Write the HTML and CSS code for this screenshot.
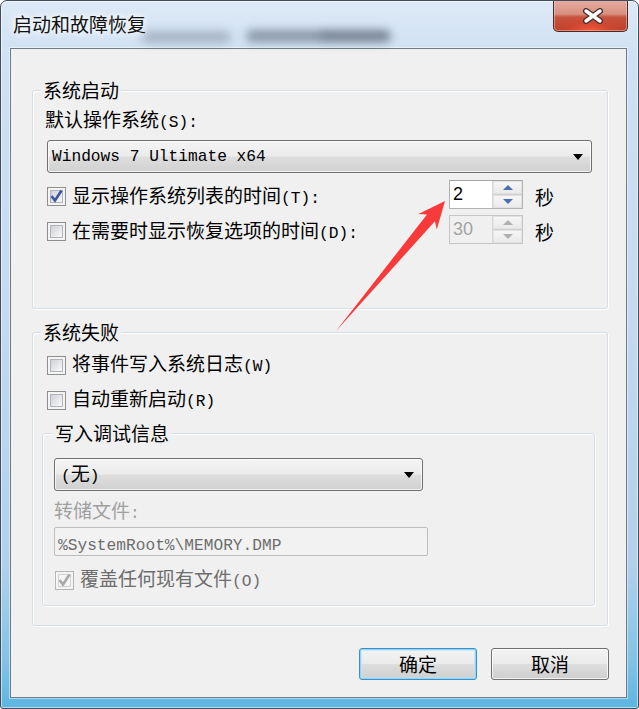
FILE: index.html
```html
<!DOCTYPE html>
<html lang="zh-CN">
<head>
<meta charset="utf-8">
<title>启动和故障恢复</title>
<link rel="stylesheet" href="styles.css">
</head>
<body>
<div class="window">
  <div class="titlebar">
    <span class="title">启动和故障恢复</span>
    <span class="ghost ghost-a"></span>
    <span class="ghost ghost-b"></span>
    <span class="ghost ghost-c"></span>
    <span class="close">
      <svg width="22" height="16" viewBox="0 0 22 16">
        <path d="M4 3 L18 13 M18 3 L4 13" stroke="#4a3030" stroke-width="6" stroke-linecap="round"/>
        <path d="M4 3 L18 13 M18 3 L4 13" stroke="#ffffff" stroke-width="3.4" stroke-linecap="round"/>
      </svg>
    </span>
  </div>

  <div class="client">
    <fieldset class="group g1">
      <legend>系统启动</legend>
      <div class="gbody g1body">
        <div class="label">默认操作系统<span class="lat">(S):</span></div>
        <div class="combo combo-os"><span class="lat">Windows 7 Ultimate x64</span><span class="caret"></span></div>
        <div class="row row1">
          <div class="chk"><span class="box"><svg viewBox="0 0 19 19"><path d="M4.5 9 L8 13.5 L14.5 3.5" fill="none" stroke="#3b57a0" stroke-width="2.6"/></svg></span><span>显示操作系统列表的时间<span class="lat">(T):</span></span></div>
          <div class="spin"><span class="val">2</span><span class="btns"><span class="sb"><i class="up"></i></span><span class="sb"><i class="down"></i></span></span></div>
          <span class="unit">秒</span>
        </div>
        <div class="row row2">
          <div class="chk"><span class="box"></span><span>在需要时显示恢复选项的时间<span class="lat">(D):</span></span></div>
          <div class="spin disabled"><span class="val">30</span><span class="btns"><span class="sb"><i class="up"></i></span><span class="sb"><i class="down"></i></span></span></div>
          <span class="unit">秒</span>
        </div>
      </div>
    </fieldset>

    <fieldset class="group g2">
      <legend>系统失败</legend>
      <div class="gbody g2body">
        <div class="line lw"><span class="box"></span><span>将事件写入系统日志<span class="lat">(W)</span></span></div>
        <div class="line lr"><span class="box"></span><span>自动重新启动<span class="lat">(R)</span></span></div>
        <fieldset class="group g3">
          <legend>写入调试信息</legend>
          <div class="gbody g3body">
            <div class="combo combo-dbg"><span><span class="lat">(</span>无<span class="lat">)</span></span><span class="caret"></span></div>
            <div class="label gray">转储文件<span class="lat">:</span></div>
            <div class="field"><span class="lat">%SystemRoot%\MEMORY.DMP</span></div>
            <div class="line lo dis"><span class="box"><svg viewBox="0 0 19 19"><path d="M4.5 9 L8 13.5 L14.5 3.5" fill="none" stroke="#a8a8a8" stroke-width="2.6"/></svg></span><span>覆盖任何现有文件<span class="lat">(O)</span></span></div>
          </div>
        </fieldset>
      </div>
    </fieldset>

    <div class="buttons">
      <button class="btn default">确定</button>
      <button class="btn">取消</button>
    </div>
  </div>

  <svg class="arrow" width="639" height="709" viewBox="0 0 639 709">
    <polygon points="336,331 427,214.5 418.4,214 445,201 436.8,229.4 434.9,221.3" fill="#f83a3a"/>
  </svg>
</div>
</body>
</html>
```

FILE: styles.css
```css
html, body {
  margin: 0;
  padding: 0;
  background: #ffffff;
}

body {
  font-family: "Noto Sans CJK SC", sans-serif;
  font-size: 19px;
  line-height: 20px;
  color: #000;
}

.lat {
  font-family: "Liberation Mono", monospace;
  font-size: 16.2px;
}

.window {
  position: relative;
  width: 639px;
  height: 709px;
  box-sizing: border-box;
  border: 1px solid #3f4d5c;
  border-radius: 7px 7px 3px 3px;
  background: linear-gradient(180deg, #dde9f6 0%, #cfe1f3 8%, #c3daf0 45%, #b0d0ec 80%, #7fc2e6 94%, #5cb5e0 100%);
  box-shadow: inset 0 0 0 1px rgba(255, 255, 255, 0.55);
  display: flex;
  flex-direction: column;
  overflow: hidden;
}

.titlebar {
  position: relative;
  height: 47px;
  flex: 0 0 47px;
  display: flex;
  justify-content: space-between;
  align-items: flex-start;
  padding: 0 10px 0 12px;
}

.title {
  position: relative;
  z-index: 1;
  margin-top: 12px;
  font-size: 19px;
  line-height: 22px;
  color: #111;
  text-shadow: 0 0 6px #fff, 0 0 10px #fff;
}

.ghost {
  position: absolute;
  height: 12px;
  border-radius: 6px;
  filter: blur(5px);
}

.ghost-a {
  left: 140px;
  top: 30px;
  width: 90px;
  background: rgba(80, 90, 110, 0.35);
}

.ghost-b {
  left: 245px;
  top: 29px;
  width: 80px;
  background: rgba(60, 70, 90, 0.5);
}

.ghost-c {
  left: 320px;
  top: 29px;
  width: 70px;
  background: rgba(50, 60, 80, 0.6);
}

.close {
  position: relative;
  z-index: 1;
  width: 75px;
  height: 32px;
  margin-top: -1px;
  box-sizing: border-box;
  border: 1px solid #4a2a28;
  border-top: none;
  border-radius: 0 0 5px 5px;
  background:
    radial-gradient(ellipse 60% 55% at 50% 100%, rgba(255, 90, 60, 0.9) 0%, rgba(220, 70, 45, 0.5) 50%, rgba(200, 60, 40, 0) 100%),
    linear-gradient(180deg, #e6aca2 0%, #d8907f 45%, #c6553f 55%, #b5402c 100%);
  box-shadow: inset 0 0 0 1px rgba(255, 220, 210, 0.45);
  display: flex;
  align-items: center;
  justify-content: center;
}

.close svg {
  display: block;
  margin-left: 4px;
}

.client {
  margin-left: 9px;
  width: 617px;
  height: 650px;
  flex: 0 0 650px;
  box-sizing: border-box;
  border: 1px solid #6f7c88;
  background: #f0f0f0;
  box-shadow: 0 0 0 1px rgba(255, 255, 255, 0.45);
  padding: 31px 18px 0 21px;
  display: flex;
  flex-direction: column;
}

.group {
  margin: 0;
  padding: 0;
  min-width: 0;
  border: 1px solid #d5dfe5;
  border-radius: 3px;
  box-shadow: inset 1px 1px 0 #ffffff, 1px 1px 0 #ffffff;
}

.group > legend {
  padding: 0 2px;
  margin-left: 8px;
  font-size: 19px;
  line-height: 20px;
  background: #f0f0f0;
}

.g1body {
  padding: 8px 15px 64px 14px;
}

.label {
  line-height: 22px;
  height: 22px;
  margin-left: -2px;
}

.combo {
  height: 33px;
  box-sizing: border-box;
  border: 1px solid #707070;
  border-radius: 3px;
  background: linear-gradient(180deg, #f4f4f4 0%, #ececec 48%, #dedede 52%, #d0d0d0 100%);
  box-shadow: inset 0 0 0 1px rgba(255, 255, 255, 0.75);
  display: flex;
  align-items: center;
  justify-content: space-between;
  padding: 0 8px 0 4px;
}

.combo-os {
  margin-top: 10px;
}

.caret {
  width: 0;
  height: 0;
  border-left: 5.5px solid transparent;
  border-right: 5.5px solid transparent;
  border-top: 6px solid #000;
}

.row {
  display: flex;
  align-items: center;
  height: 29px;
}

.row1 {
  margin-top: 7px;
}

.row2 {
  margin-top: 6px;
}

.chk {
  width: 402px;
  flex: 0 0 402px;
  display: flex;
  align-items: center;
  gap: 6px;
  margin-top: 4px;
}

.box {
  position: relative;
  width: 19px;
  height: 19px;
  flex: 0 0 19px;
  box-sizing: border-box;
  border: 1px solid #8e8f8f;
  background: #f4f4f4;
}

.box::before {
  content: "";
  position: absolute;
  left: 2px;
  top: 2px;
  right: 2px;
  bottom: 2px;
  border: 1px solid #b0b4ba;
  background: linear-gradient(135deg, #cdd1d6 0%, #e6e8eb 55%, #f8f8f8 100%);
}

.box svg {
  position: absolute;
  left: -1px;
  top: -1px;
  width: 19px;
  height: 19px;
  z-index: 1;
}

.spin {
  width: 74px;
  height: 29px;
  flex: 0 0 74px;
  box-sizing: border-box;
  border: 1px solid #b3b3b3;
  border-top-color: #a5a5a5;
  background: #ffffff;
  display: flex;
}

.val {
  flex: 1;
  padding-left: 3px;
  font-family: "Liberation Sans", sans-serif;
  font-size: 18px;
  line-height: 27px;
}

.btns {
  width: 29px;
  display: flex;
  flex-direction: column;
  border-left: 1px solid #d8d8d8;
}

.sb {
  flex: 1;
  display: flex;
  align-items: center;
  justify-content: center;
  background: linear-gradient(180deg, #f7f7f7, #e9e9e9);
  box-shadow: inset 0 0 0 1px #e2e2e2;
}

.sb + .sb {
  border-top: 1px solid #cfcfcf;
}

.up {
  width: 0;
  height: 0;
  border-left: 5px solid transparent;
  border-right: 5px solid transparent;
  border-bottom: 5px solid #4a6db5;
}

.down {
  width: 0;
  height: 0;
  border-left: 5px solid transparent;
  border-right: 5px solid transparent;
  border-top: 5px solid #4a6db5;
}

.spin.disabled {
  background: #f0f0f0;
  border-color: #c6c6c6;
}

.spin.disabled .val {
  color: #a3a3a3;
}

.spin.disabled .up {
  border-bottom-color: #b0b0b0;
}

.spin.disabled .down {
  border-top-color: #b0b0b0;
}

.unit {
  margin-left: 12px;
  margin-top: 4px;
}

.g2 {
  margin-top: 13px;
}

.g2body {
  padding: 0 12px 19px 9px;
}

.line {
  display: flex;
  align-items: center;
  gap: 6px;
  height: 22px;
  line-height: 22px;
}

.lw {
  margin-left: 5px;
  margin-top: 12px;
}

.lr {
  margin-left: 5px;
  margin-top: 13px;
}

.g3 {
  margin-top: 12px;
}

.g3 > legend {
  margin-left: 10px;
}

.g3body {
  padding: 0 0 14px 11px;
}

.combo-dbg {
  width: 369px;
  margin-top: 15px;
  padding-left: 6px;
}

.gray {
  color: #a0a0a0;
  margin-left: 0;
  margin-top: 8px;
}

.field {
  width: 374px;
  height: 29px;
  box-sizing: border-box;
  margin-top: 6px;
  border: 1px solid #bdbdbd;
  border-radius: 2px;
  background: #f2f2f2;
  padding-left: 3px;
  line-height: 27px;
  color: #6d6d6d;
}

.lo {
  margin-left: 1px;
  margin-top: 13px;
}

.dis {
  color: #6d6d6d;
}

.dis .box {
  border-color: #b5b5b5;
}

.dis .box::before {
  border-color: #d2d2d2;
  background: #f4f4f4;
}

.buttons {
  margin-top: 22px;
  display: flex;
  justify-content: flex-end;
  gap: 14px;
  padding-right: 0;
  margin-right: -1px;
}

.btn {
  width: 118px;
  height: 32px;
  box-sizing: border-box;
  padding: 0;
  margin: 0;
  border: 1px solid #707070;
  border-radius: 3px;
  background: linear-gradient(180deg, #f3f3f3 0%, #ebebeb 48%, #dddddd 52%, #cfcfcf 100%);
  box-shadow: inset 0 0 0 1px rgba(255, 255, 255, 0.75);
  font-family: "Noto Sans CJK SC", sans-serif;
  font-size: 19px;
  line-height: 30px;
  color: #000;
}

.btn.default {
  border-color: #3d8ec8;
  box-shadow: inset 0 0 0 1px #8fd6f6, inset 0 0 0 2px rgba(180, 230, 250, 0.6);
}

.arrow {
  position: absolute;
  left: -1px;
  top: -1px;
  pointer-events: none;
  z-index: 5;
}
```
